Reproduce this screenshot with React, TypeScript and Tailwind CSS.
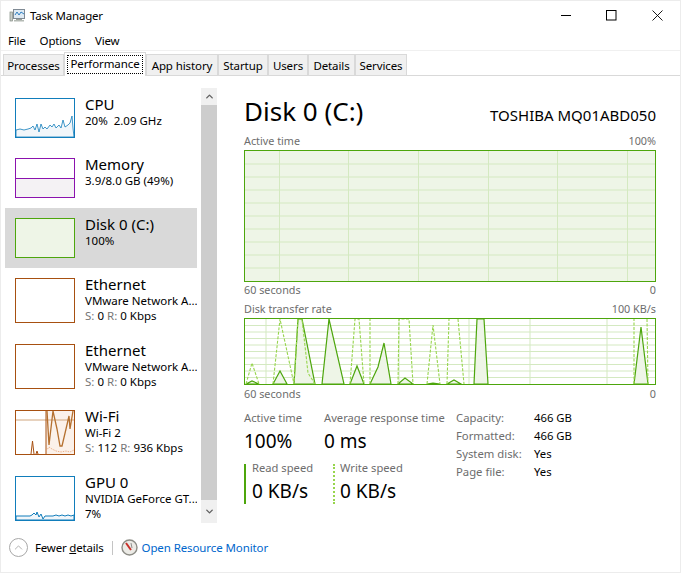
import { ReactNode } from 'react';
import { ChevronUp, ChevronDown } from 'lucide-react';

const font = "font-['Noto_Sans','Open_Sans',sans-serif]";

const tabs = ['Processes', 'Performance', 'App history', 'Startup', 'Users', 'Details', 'Services'];

const tabWidths: Record<string, string> = {
  Processes: 'w-[61px]',
  'App history': 'w-[72px]',
  Startup: 'w-[50px]',
  Users: 'w-[40px]',
  Details: 'w-[47px]',
  Services: 'w-[52px]',
};

const Thumb = ({ color, tall, bg, children }: { color: string; tall?: boolean; bg?: string; children?: ReactNode }) => (
  <div className={`relative mt-[10px] w-[60px] shrink-0 border ${color} ${bg ?? 'bg-white'} ${tall ? 'h-[40px]' : 'h-[45px]'}`}>
    {children}
  </div>
);

const Sidebar = () => (
  <div className="h-[435px] w-[192px] shrink-0 overflow-hidden">
    <div className="flex h-[60px] items-start pl-[10px]">
      <Thumb color="border-[#117dbb]" tall>
        <svg className="absolute inset-0 h-full w-full" viewBox="0 0 58 38" preserveAspectRatio="none">
          <path d="M0 31 L4 30 L8 31 L12 30 L15 29 L17 27 L19 31 L21 25 L23 33 L25 25 L27 30 L29 28 L31 30 L34 26 L36 28 L38 25 L40 29 L43 26 L45 29 L47 21 L49 28 L52 26 L54 24 L56 17 L57 29 L58 38 L0 38 Z" fill="#f1f6fa" stroke="#117dbb" strokeWidth="0.8" />
        </svg>
      </Thumb>
      <div className="ml-[10px] mt-[7px]">
        <div className="text-[15px] leading-[18px] text-black">CPU</div>
        <div className="text-[11.5px] leading-[16px] text-black">20%&nbsp; 2.09 GHz</div>
      </div>
    </div>
    <div className="flex h-[60px] items-start pl-[10px]">
      <Thumb color="border-[#8b12ae]" tall>
        <div className="absolute inset-x-0 bottom-0 h-[19px] border-t border-[#8b12ae] bg-[#f4f2f4]" />
      </Thumb>
      <div className="ml-[10px] mt-[7px]">
        <div className="text-[15px] leading-[18px] text-black">Memory</div>
        <div className="text-[11.5px] leading-[16px] text-black">3.9/8.0 GB (49%)</div>
      </div>
    </div>
    <div className="flex h-[60px] items-start bg-[#d9d9d9] pl-[10px]">
      <Thumb color="border-[#4da60c]" tall bg="bg-[#eef5e7]" />
      <div className="ml-[10px] mt-[7px]">
        <div className="text-[15px] leading-[18px] text-black">Disk 0 (C:)</div>
        <div className="text-[11.5px] leading-[16px] text-black">100%</div>
      </div>
    </div>
    <NetItem name="Ethernet" sub="VMware Network A..." s="0" r="0" />
    <NetItem name="Ethernet" sub="VMware Network A..." s="0" r="0" />
    <NetItem name="Wi-Fi" sub="Wi-Fi 2" s="112" r="936">
      <svg className="absolute inset-0 h-full w-full" viewBox="0 0 58 43" preserveAspectRatio="none">
        <path d="M30 43 V0 H58 V43 Z" fill="#fbf1ea" />
        <path d="M0 9 H58" stroke="#d0a67e" strokeWidth="1" fill="none" />
        <path d="M15 43 L16.5 30 L18 43 M20 43 L21 40 L22 43 M30 43 V0" stroke="#a75011" strokeWidth="1" fill="none" />
        <path d="M31 0 L33 34 L37 0 L41 18 L44 35 L46 35 L50 18 L53 5 L54 18 L57 0" stroke="#b5702f" strokeWidth="1.3" fill="none" />
        <path d="M30 40 L33 36 L36 38 L40 40 L45 41 L50 40 L54 41 L58 39" stroke="#e8a273" strokeWidth="0.8" strokeDasharray="1.5 1" fill="none" />
      </svg>
    </NetItem>
    <div className="flex h-[66px] items-start pl-[10px]">
      <Thumb color="border-[#117dbb]">
        <svg className="absolute inset-0 h-full w-full" viewBox="0 0 58 43" preserveAspectRatio="none">
          <path d="M0 39 H14 L16 38 L18 36 L20 38 L21 35 L23 40 L25 37 L27 42 L29 39 H37 L40 38 L43 39 L46 38 L49 39 L52 38 L55 39 L58 38 V43 H0 Z" fill="#f1f6fa" stroke="#117dbb" strokeWidth="1" />
        </svg>
      </Thumb>
      <div className="ml-[10px] mt-[7px] whitespace-nowrap">
        <div className="text-[15px] leading-[18px] text-black">GPU 0</div>
        <div className="text-[11.5px] leading-[15px] text-black">NVIDIA GeForce GT...</div>
        <div className="text-[11.5px] leading-[15px] text-black">7%</div>
      </div>
    </div>
  </div>
);

const NetItem = ({ name, sub, s, r, children }: { name: string; sub: string; s: string; r: string; children?: ReactNode }) => (
  <div className="flex h-[66px] items-start pl-[10px]">
    <Thumb color="border-[#a75011]">{children}</Thumb>
    <div className="ml-[10px] mt-[7px] whitespace-nowrap">
      <div className="text-[15px] leading-[18px] text-black">{name}</div>
      <div className="text-[11.5px] leading-[15px] text-black">{sub}</div>
      <div className="text-[11.5px] leading-[15px] text-black">
        <span className="text-[#767676]">S:</span> {s} <span className="text-[#767676]">R:</span> {r} Kbps
      </div>
    </div>
  </div>
);

const Scrollbar = () => (
  <div className="flex h-[435px] w-[16px] flex-col bg-[#f0f0f0]">
    <div className="flex h-[17px] items-center justify-center"><ChevronUp size={11} strokeWidth={3} color="#606060" /></div>
    <div className="h-[395px] bg-[#cdcdcd]" />
    <div className="flex flex-1 items-center justify-center"><ChevronDown size={11} strokeWidth={3} color="#606060" /></div>
  </div>
);

const Grid = ({ w, h, xs, rows }: { w: number; h: number; xs: number[]; rows: number }) => (
  <>
    {Array.from({ length: rows - 1 }, (_, i) => (
      <path key={i} d={`M0 ${((i + 1) * h) / rows} H${w}`} stroke="#d4e9c1" strokeWidth="1" />
    ))}
    {xs.map((x) => (
      <path key={x} d={`M${x} 0 V${h}`} stroke="#d4e9c1" strokeWidth="1" />
    ))}
  </>
);

const ActiveChart = () => (
  <div className="h-[132px] border border-[#4da60c] bg-[#eef5e7]">
    <svg className="h-full w-full" viewBox="0 0 410 130" preserveAspectRatio="none">
      <Grid w={410} h={130} xs={[34.5, 103.5, 173.5, 243.5, 312.5, 382.5]} rows={10} />
    </svg>
  </div>
);

const readPeaks = [
  '1,65 7,62 14,65',
  '28,65 35,52 42,65',
  '49,65 53,0 57,0 70,65',
  '77,65 84,0 99,65',
  '105,65 112,47 119,65',
  '125,65 133,48 139,24 146,65',
  '153,65 160,59 168,65',
  '182,65 188,64 195,65',
  '202,65 209,61 216,65',
  '229,65 232,0 239,0 243,65',
  '389,65 396,8 403,65',
];

const writePeaks = [
  '1,65 7,44 14,65',
  '28,65 35,0 49,65 53,0 57,0 63,54 70,65',
  '105,65 110,0 114,0 119,65',
  '125,65 125,0',
  '153,65 154,0 164,0 168,65',
  '182,65 188,6 195,65',
  '202,65 204,0',
  '213,0 219,65',
  '389,65 389,0',
  '402,0 403,65',
];

const TransferChart = () => (
  <div className="h-[67px] border border-[#4da60c] bg-white">
    <svg className="h-full w-full" viewBox="0 0 410 65" preserveAspectRatio="none">
      <Grid w={410} h={65} xs={[21, 84, 154, 224, 285, 362]} rows={10} />
      {readPeaks.map((p) => (
        <polygon key={p} points={p} fill="#eef5e7" stroke="#4da60c" strokeWidth="1.2" />
      ))}
      {writePeaks.map((p) => (
        <polyline key={p} points={p} fill="none" stroke="#97d54d" strokeWidth="1.1" strokeDasharray="3 1.5" />
      ))}
    </svg>
  </div>
);

const Stat = ({ label, value, width }: { label: string; value: string; width: string }) => (
  <div className={width}>
    <div className="whitespace-nowrap text-[11.2px] leading-[16px] text-[#6d6d6d]">{label}</div>
    <div className="mt-[3px] text-[19px] leading-[24px] text-black">{value}</div>
  </div>
);

const details = [
  ['Capacity:', '466 GB'],
  ['Formatted:', '466 GB'],
  ['System disk:', 'Yes'],
  ['Page file:', 'Yes'],
];

const Main = () => (
  <div className="ml-[27px] w-[412px]">
    <div className="flex h-[46px] items-center justify-between">
      <div className="text-[26px] text-black">Disk 0 (C:)</div>
      <div className="mt-[8px] text-[15px] text-black">TOSHIBA MQ01ABD050</div>
    </div>
    <div className="mb-[1px] flex h-[15px] items-center justify-between text-[10.8px] text-[#6d6d6d]">
      <span>Active time</span>
      <span>100%</span>
    </div>
    <ActiveChart />
    <div className="flex h-[16px] items-center justify-between text-[10.8px] text-[#6d6d6d]">
      <span>60 seconds</span>
      <span>0</span>
    </div>
    <div className="mb-[1px] mt-[3px] flex h-[16px] items-center justify-between text-[10.8px] text-[#6d6d6d]">
      <span>Disk transfer rate</span>
      <span>100 KB/s</span>
    </div>
    <TransferChart />
    <div className="flex h-[18px] items-center justify-between text-[10.8px] text-[#6d6d6d]">
      <span>60 seconds</span>
      <span>0</span>
    </div>
    <div className="mt-[7px] flex">
      <div className="w-[212px]">
        <div className="flex">
          <Stat label="Active time" value="100%" width="w-[80px]" />
          <Stat label="Average response time" value="0 ms" width="w-[132px]" />
        </div>
        <div className="mt-[11px] flex">
          <div className="h-[40px] w-[89px] border-l-2 border-[#4da60c] pl-[6px]">
            <div className="-mt-[4px]">
              <Stat label="Read speed" value="0 KB/s" width="w-[80px]" />
            </div>
          </div>
          <div className="h-[40px] w-[88px] border-l-2 border-dotted border-[#97d54d] pl-[5px]">
            <div className="-mt-[4px]">
              <Stat label="Write speed" value="0 KB/s" width="w-[80px]" />
            </div>
          </div>
        </div>
      </div>
      <div className="-mt-[1px] w-[200px]">
        {details.map(([k, v]) => (
          <div key={k} className="flex h-[18px] items-center text-[11.3px]">
            <span className="w-[78px] text-[#6d6d6d]">{k}</span>
            <span className="text-black">{v}</span>
          </div>
        ))}
      </div>
    </div>
  </div>
);

const App = () => (
  <div className={`${font} flex h-[573px] w-[681px] flex-col overflow-hidden border-x border-y border-[#ececec] bg-white`}>
    {/* title bar */}
    <div className="flex h-[30px] shrink-0 items-center pl-[8px]">
      <svg width="17" height="16" viewBox="0 0 17 16">
        <rect x="4.5" y="1.5" width="11" height="9" fill="#dfeaf3" stroke="#7f8a94" />
        <path d="M6 7 L8 4 L10 7 L12 4 L15 6" stroke="#2f7fc1" fill="none" />
        <rect x="1" y="4" width="2.5" height="9" fill="#c8ccc8" stroke="#808a80" strokeWidth="0.7" />
        <rect x="7" y="11" width="6" height="1" fill="#9aa09a" />
        <rect x="5" y="12" width="10" height="1.5" fill="#b4bab4" />
      </svg>
      <span className="ml-[4px] text-[11.5px] tracking-[-0.2px] text-black">Task Manager</span>
      <div className="-mt-[2px] ml-auto mr-[17px] flex items-center">
        <svg width="11" height="11" viewBox="0 0 11 11"><path d="M0 5.5 H10" stroke="#000" /></svg>
        <svg className="ml-[34px]" width="11" height="11" viewBox="0 0 11 11"><rect x="0.5" y="0.5" width="9.5" height="9.5" fill="none" stroke="#000" /></svg>
        <svg className="ml-[35px]" width="11" height="11" viewBox="0 0 11 11"><path d="M0.5 0.5 L10.5 10.5 M10.5 0.5 L0.5 10.5" stroke="#000" strokeWidth="0.9" /></svg>
      </div>
    </div>
    {/* menu */}
    <div className="flex h-[20px] shrink-0 items-center gap-[14px] border-b border-[#f0f0f0] pl-[7px] text-[11.5px] tracking-[-0.2px] text-black">
      <span>File</span>
      <span>Options</span>
      <span>View</span>
    </div>
    {/* tabs */}
    <div className="flex h-[25px] shrink-0 items-end border-b border-[#d9d9d9] pl-[2px]">
      {tabs.map((t) =>
        t === 'Performance' ? (
          <div key={t} className="relative z-10 -mb-px flex h-[24px] w-[82px] items-center justify-center border border-b-0 border-[#d9d9d9] bg-white pb-[2px] text-[11.5px] tracking-[-0.1px] text-black">
            <span className="absolute inset-x-[2px] inset-y-[2px] border border-dotted border-black" />
            {t}
          </div>
        ) : (
          <div key={t} className={`flex h-[21px] items-center justify-center border border-b-0 border-[#d9d9d9] bg-[#f0f0f0] pt-[1px] text-[11.5px] tracking-[-0.1px] text-black ${tabWidths[t]}`}>
            {t}
          </div>
        ),
      )}
    </div>
    {/* body */}
    <div className="flex h-[447px] shrink-0 items-start pl-[4px] pt-[12px]">
      <Sidebar />
      <div className="ml-[4px]">
        <Scrollbar />
      </div>
      <Main />
    </div>
    {/* footer */}
    <div className="flex h-[49px] shrink-0 items-center pl-[8px]">
      <div className="flex h-[19px] w-[19px] items-center justify-center rounded-full border border-[#a8a8a8]">
        <ChevronUp size={13} strokeWidth={1.2} color="#8a8a8a" />
      </div>
      <span className="ml-[7px] text-[11.5px] tracking-[-0.2px] text-black">Fewer <span className="underline">d</span>etails</span>
      <span className="ml-[8px] h-[14px] border-l border-[#c4c4c4]" />
      <svg className="ml-[8px]" width="17" height="17" viewBox="0 0 17 17">
        <circle cx="8.5" cy="8.5" r="7.5" fill="#ecebe6" stroke="#8d8d86" strokeWidth="1.4" />
        <path d="M5 4 L10 11" stroke="#c8302a" strokeWidth="2" />
        <path d="M10 4 L11 9" stroke="#777" strokeWidth="0.8" />
      </svg>
      <span className="ml-[4px] text-[11.5px] tracking-[-0.1px] text-[#0066cc]">Open Resource Monitor</span>
    </div>
  </div>
);

export default App;
